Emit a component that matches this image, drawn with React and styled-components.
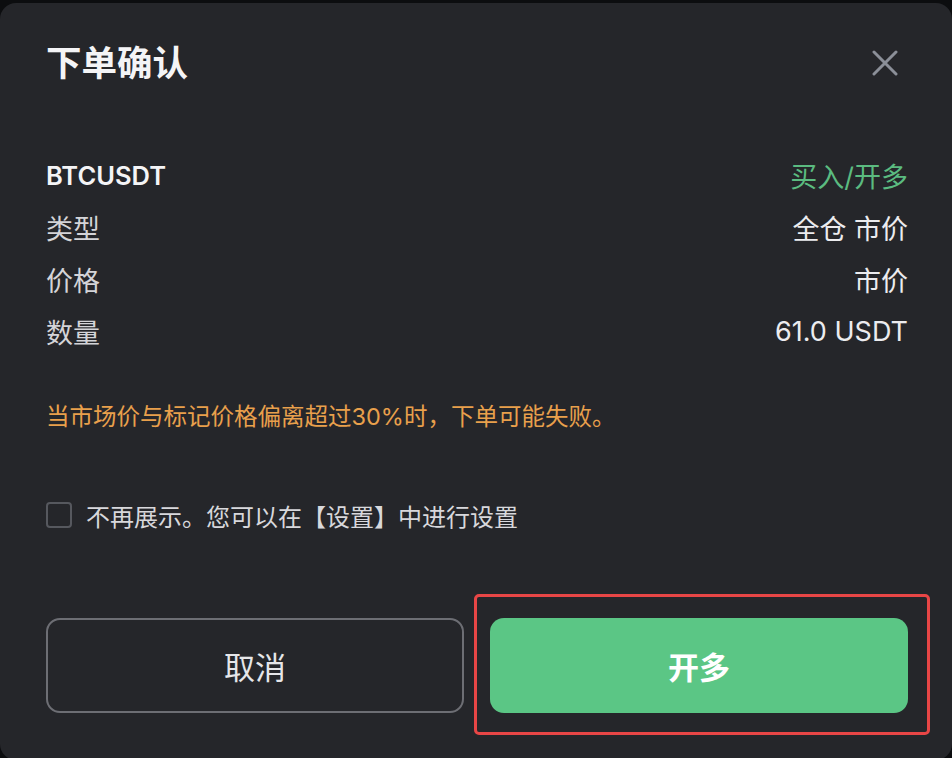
import styled, { createGlobalStyle } from "styled-components";

const GlobalStyle = createGlobalStyle`
  html, body {
    margin: 0;
    padding: 0;
    background: #0c0d0f;
    height: 758px;
    overflow: hidden;
  }
  body {
    font-family: Inter, "Noto Sans", "Noto Sans CJK SC", sans-serif;
  }
`;

const Panel = styled.div`
  margin-top: 3px;
  height: 757px;
  box-sizing: border-box;
  background: #25262a;
  border-radius: 16px;
  padding: 34px 44px 0 46px;
  display: flex;
  flex-direction: column;
`;

const Header = styled.div`
  display: flex;
  align-items: center;
  justify-content: space-between;
  height: 46px;
`;

const Title = styled.h1`
  margin: 0;
  font-size: 35.5px;
  font-weight: 700;
  color: #f4f4f6;
`;

const CloseButton = styled.button`
  background: none;
  border: none;
  padding: 0;
  margin: 6px 8px 0 0;
  width: 30px;
  height: 30px;
  display: flex;
  align-items: center;
  justify-content: center;
  cursor: pointer;
`;

const Details = styled.div`
  margin-top: 66px;
  display: flex;
  flex-direction: column;
`;

const Row = styled.div`
  display: flex;
  align-items: center;
  justify-content: space-between;
  height: 52px;
  font-size: 27px;
`;

const Label = styled.span`
  color: ${(p) => (p.$strong ? "#f4f4f6" : "#d4d4d8")};
  font-weight: ${(p) => (p.$strong ? 600 : 400)};
  font-size: ${(p) => (p.$strong ? "25.5px" : "inherit")};
`;

const Value = styled.span`
  color: ${(p) => (p.$green ? "#5bbb80" : "#ececef")};
`;

const Warning = styled.p`
  margin: 45px 0 0;
  line-height: 30px;
  font-size: 23.5px;
  color: #e9a04c;
`;

const CheckRow = styled.label`
  margin-top: 68px;
  display: flex;
  align-items: center;
  gap: 14px;
  height: 30px;
  font-size: 24px;
  color: #d8d8dc;
  cursor: pointer;
`;

const Box = styled.span`
  width: 22px;
  height: 22px;
  border: 2px solid #56585e;
  border-radius: 4px;
`;

const Actions = styled.div`
  margin-top: 88px;
  display: grid;
  grid-template-columns: 1fr 1fr;
  gap: 26px;
`;

const Button = styled.button`
  height: 95px;
  box-sizing: border-box;
  border-radius: 14px;
  font-family: inherit;
  font-size: 31px;
  cursor: pointer;
  border: ${(p) => (p.$primary ? "none" : "2px solid #6d6e74")};
  background: ${(p) => (p.$primary ? "#5bc685" : "transparent")};
  color: ${(p) => (p.$primary ? "#ffffff" : "#e6e6e9")};
  font-weight: ${(p) => (p.$primary ? 700 : 400)};
`;

const Highlight = styled.div`
  position: relative;
  display: flex;
  flex-direction: column;
`;

const Outline = styled.span`
  position: absolute;
  top: -24px;
  left: -16px;
  right: -22px;
  bottom: -22px;
  border: 3px solid #e84646;
  border-radius: 5px;
  pointer-events: none;
`;

const rows = [
  { label: "类型", value: "全仓 市价" },
  { label: "价格", value: "市价" },
  { label: "数量", value: "61.0 USDT" },
];

export default function App() {
  return (
    <>
      <GlobalStyle />
      <Panel>
        <Header>
          <Title>下单确认</Title>
          <CloseButton aria-label="关闭">
            <svg width="26" height="26" viewBox="0 0 26 26" fill="none">
              <path d="M2 2L24 24M24 2L2 24" stroke="#8b8f98" strokeWidth="3" strokeLinecap="round" />
            </svg>
          </CloseButton>
        </Header>

        <Details>
          <Row>
            <Label $strong>BTCUSDT</Label>
            <Value $green>买入/开多</Value>
          </Row>
          {rows.map((r) => (
            <Row key={r.label}>
              <Label>{r.label}</Label>
              <Value>{r.value}</Value>
            </Row>
          ))}
        </Details>

        <Warning>当市场价与标记价格偏离超过30%时，下单可能失败。</Warning>

        <CheckRow>
          <Box />
          不再展示。您可以在【设置】中进行设置
        </CheckRow>

        <Actions>
          <Button>取消</Button>
          <Highlight>
            <Outline />
            <Button $primary>开多</Button>
          </Highlight>
        </Actions>
      </Panel>
    </>
  );
}
